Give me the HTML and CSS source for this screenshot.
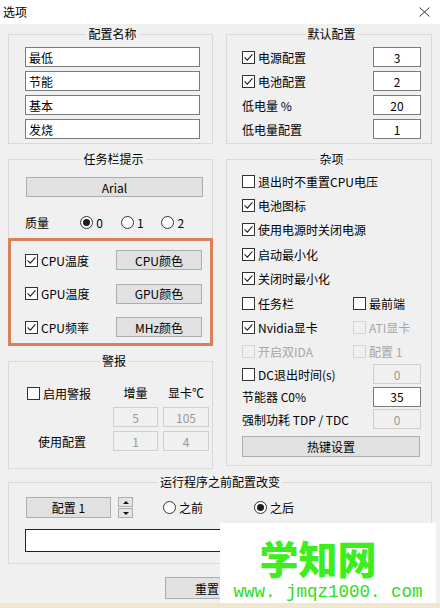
FILE: index.html
```html
<!DOCTYPE html>
<html lang="zh-CN">
<head>
    <meta charset="UTF-8">
    <meta name="viewport" content="width=device-width, initial-scale=1.0">
    <title>选项</title>
    <link rel="stylesheet" href="styles.css">
</head>
<body>
<svg class="defs" aria-hidden="true">
    <symbol id="tick" viewBox="0 0 11 11">
        <path d="M1.6 5.4 4.3 8.1 9.4 2.4" fill="none" stroke="#1e1e1e" stroke-width="1.1"/>
    </symbol>
</svg>

<div class="window">
    <div class="titlebar">
        <span class="title">选项</span>
        <svg class="close" width="11" height="10" viewBox="0 0 11 10"><path d="M0.5 0.5 10.5 9.5M10.5 0.5 0.5 9.5"/></svg>
    </div>

    <div class="content">
        <div class="pair">
            <fieldset class="group names">
                <legend>配置名称</legend>
                <input class="field" type="text" value="最低">
                <input class="field" type="text" value="节能">
                <input class="field" type="text" value="基本">
                <input class="field" type="text" value="发烧">
            </fieldset>

            <fieldset class="group defaults">
                <legend>默认配置</legend>
                <div class="line">
                    <label class="check"><span class="box"><svg><use href="#tick"/></svg></span>电源配置</label>
                    <input class="num" type="text" value="3">
                </div>
                <div class="line">
                    <label class="check"><span class="box"><svg><use href="#tick"/></svg></span>电池配置</label>
                    <input class="num" type="text" value="2">
                </div>
                <div class="line">
                    <span>低电量 %</span>
                    <input class="num" type="text" value="20">
                </div>
                <div class="line">
                    <span>低电量配置</span>
                    <input class="num" type="text" value="1">
                </div>
            </fieldset>
        </div>

        <div class="pair mid">
            <div class="col">
                <fieldset class="group taskbar">
                    <legend>任务栏提示</legend>
                    <button class="btn font-btn" type="button">Arial</button>
                    <div class="quality">
                        <span class="q-label">质量</span>
                        <label class="radio-item"><span class="radio on"></span>0</label>
                        <label class="radio-item"><span class="radio"></span>1</label>
                        <label class="radio-item"><span class="radio"></span>2</label>
                    </div>
                    <div class="highlight">
                        <div class="color-row">
                            <label class="check"><span class="box"><svg><use href="#tick"/></svg></span>CPU温度</label>
                            <button class="btn color-btn" type="button">CPU颜色</button>
                        </div>
                        <div class="color-row">
                            <label class="check"><span class="box"><svg><use href="#tick"/></svg></span>GPU温度</label>
                            <button class="btn color-btn" type="button">GPU颜色</button>
                        </div>
                        <div class="color-row">
                            <label class="check"><span class="box"><svg><use href="#tick"/></svg></span>CPU频率</label>
                            <button class="btn color-btn" type="button">MHz颜色</button>
                        </div>
                    </div>
                </fieldset>

                <fieldset class="group alarm">
                    <legend>警报</legend>
                    <div class="alarm-grid">
                        <label class="check enable"><span class="box off"></span>启用警报</label>
                        <span class="head">增量</span>
                        <span class="head">显卡℃</span>

                        <span></span>
                        <input class="num" type="text" value="5" disabled>
                        <input class="num" type="text" value="105" disabled>

                        <span class="use-label">使用配置</span>
                        <input class="num" type="text" value="1" disabled>
                        <input class="num" type="text" value="4" disabled>
                    </div>
                </fieldset>
            </div>

            <fieldset class="group misc">
                <legend>杂项</legend>
                <div class="opt"><label class="check"><span class="box off"></span>退出时不重置CPU电压</label></div>
                <div class="opt"><label class="check"><span class="box"><svg><use href="#tick"/></svg></span>电池图标</label></div>
                <div class="opt"><label class="check"><span class="box"><svg><use href="#tick"/></svg></span>使用电源时关闭电源</label></div>
                <div class="opt"><label class="check"><span class="box"><svg><use href="#tick"/></svg></span>启动最小化</label></div>
                <div class="opt"><label class="check"><span class="box"><svg><use href="#tick"/></svg></span>关闭时最小化</label></div>
                <div class="opt two">
                    <label class="check"><span class="box off"></span>任务栏</label>
                    <label class="check"><span class="box off"></span>最前端</label>
                </div>
                <div class="opt two">
                    <label class="check"><span class="box"><svg><use href="#tick"/></svg></span>Nvidia显卡</label>
                    <label class="check disabled"><span class="box off"></span>ATI显卡</label>
                </div>
                <div class="opt two">
                    <label class="check disabled"><span class="box off"></span>开启双IDA</label>
                    <label class="check disabled"><span class="box off"></span>配置 1</label>
                </div>
                <div class="line">
                    <label class="check"><span class="box off"></span>DC退出时间(s)</label>
                    <input class="num" type="text" value="0" disabled>
                </div>
                <div class="line">
                    <span>节能器 C0%</span>
                    <input class="num" type="text" value="35">
                </div>
                <div class="line">
                    <span>强制功耗 TDP / TDC</span>
                    <input class="num" type="text" value="0" disabled>
                </div>
                <button class="btn hotkey" type="button">热键设置</button>
            </fieldset>
        </div>

        <fieldset class="group run">
            <legend>运行程序之前配置改变</legend>
            <div class="run-row">
                <button class="btn profile" type="button">配置 1</button>
                <span class="spin">
                    <span class="spin-up"></span>
                    <span class="spin-down"></span>
                </span>
                <label class="radio-item before"><span class="radio"></span>之前</label>
                <label class="radio-item"><span class="radio on"></span>之后</label>
            </div>
            <input class="path" type="text" value="">
        </fieldset>

        <div class="actions">
            <button class="btn reset" type="button">重置</button>
        </div>
    </div>

    <div class="edge"></div>

    <div class="watermark">
        <div class="wm-title">学知网</div>
        <div class="wm-url">www. jmqz1000. com</div>
    </div>
</div>
</body>
</html>
```

FILE: styles.css
```css
* {
    box-sizing: border-box;
}
body {
    margin: 0;
    background-color: #f0f0f0;
    font-family: "Noto Sans CJK SC", "Noto Sans", sans-serif;
    font-size: 12px;
    color: #000;
}
.defs {
    position: absolute;
    width: 0;
    height: 0;
}
.window {
    position: relative;
    width: 440px;
    height: 608px;
    overflow: hidden;
    display: flex;
    flex-direction: column;
    background-color: #f0f0f0;
}
.titlebar {
    height: 24px;
    flex: none;
    background-color: #fff;
    display: flex;
    align-items: center;
    justify-content: space-between;
    padding: 0 10px 0 3px;
}
.title {
    line-height: 16px;
}
.close path {
    stroke: #333;
    stroke-width: 1;
}
.content {
    padding: 2px 8px 0;
}

/* group boxes */
.group {
    margin: 0;
    min-width: 0;
    border: 1px solid #d9d9d9;
    padding: 0;
}
.group legend {
    margin: 0 auto;
    padding: 0 2px;
    line-height: 16px;
}
.pair {
    display: grid;
    grid-template-columns: 205px 206px;
    column-gap: 13px;
    align-items: start;
}
.mid {
    margin-top: 7px;
}
.col {
    display: flex;
    flex-direction: column;
    gap: 7px;
}

/* controls */
input {
    font: inherit;
    color: inherit;
    margin: 0;
    outline: none;
}
.field {
    display: block;
    width: 100%;
    height: 20px;
    margin-bottom: 4px;
    padding: 0 3px;
    background-color: #fff;
    border: 1px solid #7a7a7a;
}
.field:last-child {
    margin-bottom: 0;
}
.num {
    width: 48px;
    height: 20px;
    padding: 0;
    text-align: center;
    background-color: #fff;
    border: 1px solid #7a7a7a;
}
.num:disabled {
    background-color: #f0f0f0;
    border-color: #cfcfcf;
    color: #9a9a9a;
}
.btn {
    font: inherit;
    color: #000;
    height: 20px;
    padding: 0;
    background-color: #e1e1e1;
    border: 1px solid #adadad;
    cursor: pointer;
}
.check {
    display: inline-flex;
    align-items: center;
    white-space: nowrap;
}
.check.disabled {
    color: #a6a6a6;
}
.box {
    width: 13px;
    height: 13px;
    flex: none;
    margin-right: 3px;
    background-color: #fff;
    border: 1px solid #333;
    display: inline-flex;
}
.box svg {
    width: 11px;
    height: 11px;
}
.check.disabled .box {
    background-color: #f0f0f0;
    border-color: #d4d4d4;
}
.radio-item {
    display: inline-flex;
    align-items: center;
}
.radio {
    width: 13px;
    height: 13px;
    margin-right: 3px;
    border: 1px solid #333;
    border-radius: 50%;
    background-color: #fff;
    display: inline-flex;
    align-items: center;
    justify-content: center;
}
.radio.on::after {
    content: "";
    width: 7px;
    height: 7px;
    border-radius: 50%;
    background-color: #1e1e1e;
}

/* 配置名称 */
.names {
    padding: 5px 12px 4px 16px;
}

/* 默认配置 */
.defaults {
    padding: 5px 10px 4px 15px;
}
.line {
    display: flex;
    align-items: center;
    justify-content: space-between;
    height: 20px;
    margin-bottom: 4px;
}
.defaults .line:last-child {
    margin-bottom: 0;
}

/* 任务栏提示 */
.taskbar {
    padding: 10px 10px 0 16px;
}
.font-btn {
    display: block;
    width: 177px;
    margin-left: 1px;
}
.quality {
    display: flex;
    align-items: center;
    height: 16px;
    margin-top: 17px;
}
.q-label {
    width: 60px;
}
.quality .radio-item {
    width: 44px;
}
.highlight {
    margin: 8px -11px -1px -17px;
    padding: 9px 8px 6px 14px;
    border: 3px solid #da8159;
    display: flex;
    flex-direction: column;
    gap: 13.5px;
}
.color-row {
    display: flex;
    align-items: center;
    justify-content: space-between;
}
.color-btn {
    width: 86px;
}

/* 警报 */
.alarm {
    padding: 16px 10px 17px 17px;
}
.alarm-grid {
    display: grid;
    grid-template-columns: 82px 45px 46px;
    grid-template-rows: 18px 20px 20px;
    column-gap: 5px;
    row-gap: 4px;
}
.alarm-grid .head {
    text-align: center;
    line-height: 16px;
}
.enable {
    align-self: start;
    height: 16px;
    margin-left: 1px;
}
.alarm-grid .num {
    width: 100%;
}
.use-label {
    align-self: center;
    padding-left: 12px;
}

/* 杂项 */
.misc {
    padding: 2px 10px 8px 15px;
}
.opt {
    height: 24.4px;
    display: flex;
    align-items: center;
}
.opt.two {
    display: grid;
    grid-template-columns: 111px auto;
}
.misc .line {
    margin-bottom: 2.5px;
}
.hotkey {
    display: block;
    width: 178px;
    height: 21px;
    margin-top: 7px;
}

/* 运行程序之前配置改变 */
.run {
    margin-top: 5px;
    padding: 7px 16px 11px 16px;
}
.run-row {
    display: flex;
    align-items: center;
    height: 21px;
}
.profile {
    width: 85px;
    height: 21px;
    margin-left: 1px;
}
.spin {
    width: 15px;
    height: 21px;
    margin-left: 7px;
    display: flex;
    flex-direction: column;
    gap: 1px;
}
.spin-up, .spin-down {
    flex: 1;
    background-color: #e5e5e5;
    border: 1px solid #adadad;
    display: flex;
    align-items: center;
    justify-content: center;
}
.spin-up::after {
    content: "";
    border-left: 3px solid transparent;
    border-right: 3px solid transparent;
    border-bottom: 3px solid #111;
}
.spin-down::after {
    content: "";
    border-left: 3px solid transparent;
    border-right: 3px solid transparent;
    border-top: 3px solid #111;
}
.before {
    width: 91px;
    margin-left: 30px;
}
.path {
    display: block;
    width: 391px;
    height: 23px;
    margin-top: 11px;
    background-color: #fff;
    border: 1px solid #222;
}

/* bottom */
.actions {
    padding: 13px 0 0 157px;
}
.reset {
    width: 84px;
    height: 22px;
}
.edge {
    margin-top: auto;
    height: 5px;
    background-color: #f1e6cf;
}

/* watermark lying over the dialog */
.watermark {
    position: absolute;
    left: 220px;
    top: 523px;
    width: 216px;
    height: 80px;
    background-color: #fff;
    text-align: center;
}
.wm-title {
    margin-top: 14px;
    padding-right: 20px;
    font-family: "Noto Sans CJK SC", sans-serif;
    font-weight: 900;
    font-size: 39px;
    line-height: 40px;
    color: #3cee1c;
}
.wm-url {
    margin-top: 6px;
    font-family: "Liberation Mono", monospace;
    font-size: 17.5px;
    line-height: 18px;
    color: #30dc1e;
}
```
